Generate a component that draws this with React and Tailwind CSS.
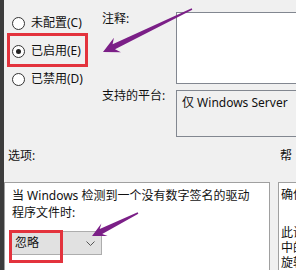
function Radio({ label, checked }) {
  return (
    <div className="flex h-[28px] items-center gap-[6px] pl-[8px]">
      <span className="flex h-[13px] w-[13px] items-center justify-center rounded-full border border-[#333] bg-white">
        {checked && <span className="h-[5px] w-[5px] rounded-full bg-[#222]" />}
      </span>
      <span className="text-[12px] leading-none text-[#111]">{label}</span>
    </div>
  );
}

function Arrow({ tip, tail, head = 16, half = 8 }) {
  const dx = tail[0] - tip[0];
  const dy = tail[1] - tip[1];
  const len = Math.hypot(dx, dy);
  const u = [dx / len, dy / len];
  const n = [-u[1], u[0]];
  const b = [tip[0] + u[0] * head, tip[1] + u[1] * head];
  const nb = [tip[0] + u[0] * (head - 4), tip[1] + u[1] * (head - 4)];
  const p = (c, k) => `${c[0] + n[0] * k},${c[1] + n[1] * k}`;
  const pts = [
    `${tip[0]},${tip[1]}`,
    p(b, half),
    p(nb, 2.8),
    p(tail, 0.7),
    p(tail, -0.7),
    p(nb, -2.8),
    p(b, -half),
  ].join(' ');
  return <polygon points={pts} fill="#7b1f87" />;
}

export default function App() {
  return (
    <div
      className="relative flex h-[270px] w-[296px] overflow-hidden bg-[#f0f0f0] text-[#111]"
      style={{ fontFamily: '"Noto Sans", "Noto Sans CJK SC", sans-serif' }}
    >
      {/* dark window edge */}
      <div className="w-[4px] shrink-0 bg-[#3c3c3c]" />

      <div className="flex min-w-0 flex-1 flex-col">
        {/* state + comment + platform */}
        <div className="flex h-[140px]">
          <div className="w-[98px] shrink-0 pt-[9px]">
            <Radio label="未配置(C)" />
            <Radio label="已启用(E)" checked />
            <Radio label="已禁用(D)" />
          </div>
          <div className="grid min-w-0 flex-1 grid-cols-[74px_1fr] grid-rows-[72px_47px] gap-y-[6px] overflow-hidden pt-[12px]">
            <div className="pt-[1px] text-[12px] leading-[12px]">注释:</div>
            <div className="w-[140px] border border-[#828790] bg-white" />
            <div className="text-[12px] leading-[12px]">支持的平台:</div>
            <div className="w-[140px] border border-[#828790] bg-[#f0f0f0] pl-[5px] pt-[4px] text-[12px] leading-[16px]">
              仅 Windows Server
            </div>
          </div>
        </div>

        {/* section labels */}
        <div className="flex h-[45px] items-start pt-[12px] text-[12px] leading-[12px]">
          <span className="pl-[4px]">选项:</span>
          <span className="ml-auto pr-[4px]">帮</span>
        </div>

        {/* options + help panes */}
        <div className="flex flex-1 gap-[8px]">
          <div className="w-[266px] shrink-0 border-l border-t border-r border-[#a0a0a0] bg-white pl-[7px] pt-[4px]">
            <p className="text-[12px] leading-[17px]">当 Windows 检测到一个没有数字签名的驱动</p>
            <p className="text-[12px] leading-[17px]">程序文件时:</p>
            <div className="ml-[-2px] mt-[10px] flex h-[24px] w-[92px] items-center justify-between border border-[#adadad] bg-[#e1e1e1] pl-[4px] pr-[6px] text-[12px]">
              <span>忽略</span>
              <svg width="9" height="6" viewBox="0 0 9 6" className="mt-[2px]">
                <path d="M0.5 0.5 L4.5 4.5 L8.5 0.5" fill="none" stroke="#555" strokeWidth="1" />
              </svg>
            </div>
          </div>
          <div className="min-w-0 flex-1 overflow-hidden whitespace-nowrap border-l border-t border-[#a0a0a0] bg-white pl-[2px] pt-[4px] text-[12px] leading-[15px]">
            <p>确保</p>
            <p className="mt-[23px]">此设</p>
            <p>中的</p>
            <p>旋转</p>
          </div>
        </div>
      </div>

      {/* annotations */}
      <div className="pointer-events-none absolute left-[7px] top-[33px] h-[34px] w-[81px] border-[3px] border-[#e3333d]" />
      <div className="pointer-events-none absolute left-[9px] top-[230px] h-[33px] w-[54px] border-[3px] border-[#e3333d]" />
      <svg className="pointer-events-none absolute left-0 top-0" width="296" height="270">
        <Arrow tip={[103, 52]} tail={[192, 9]} head={16} half={8} />
        <Arrow tip={[92, 236]} tail={[138, 213]} head={14} half={7} />
      </svg>
    </div>
  );
}
